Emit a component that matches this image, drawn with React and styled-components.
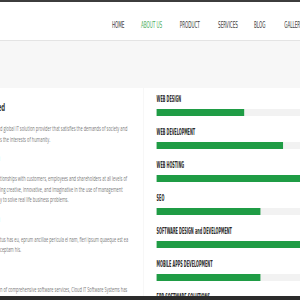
import React from "react";
import styled, { createGlobalStyle } from "styled-components";

const Global = createGlobalStyle`
  html, body {
    margin: 0;
    padding: 0;
    overflow: hidden;
    background: #fff;
  }
`;

// the whole page is drawn narrow, as in the screenshot
const Page = styled.div`
  width: 518px;
  transform: scaleX(0.58);
  transform-origin: 0 0;
  font-family: "Open Sans", sans-serif;
`;

const TopStrip = styled.div`
  height: 2px;
  background: #3d3d3d;
`;

const Header = styled.header`
  box-sizing: border-box;
  height: 39px;
  padding: 0 0 9px 193px;
  background: #fff;
  border-bottom: 1px solid #e4e4e4;
  box-shadow: 0 1px 3px rgba(0, 0, 0, 0.05);
  display: grid;
  grid-template-columns: 50px 67px 66px 62px 52px auto;
  align-items: end;
`;

const NavLink = styled.a`
  font-family: "DejaVu Sans Condensed", "DejaVu Sans", sans-serif;
  font-size: 8px;
  line-height: 10px;
  letter-spacing: -0.1px;
  text-transform: uppercase;
  text-decoration: none;
  white-space: nowrap;
  color: ${(p) => (p.$active ? "#4aad5b" : "#3a3a3a")};
`;

const Banner = styled.div`
  height: 47px;
  background: #f7f7f7;
`;

const Content = styled.main`
  height: 208px;
  overflow: hidden;
  display: flex;
`;

const Left = styled.section`
  flex: none;
  width: 247px;
  padding-top: 12px;
  border-right: 1px solid #f1f1f1;
`;

const Block = styled.div`
  margin-bottom: 5px;
`;

const TitleClip = styled.div`
  width: ${(p) => p.$reach}px;
  display: flex;
  justify-content: flex-end;
  margin-bottom: 10px;
`;

const Title = styled.h3`
  margin: 0;
  flex: none;
  white-space: nowrap;
  font-size: 10.5px;
  line-height: 14px;
  font-weight: 700;
  color: #333;
`;

const Line = styled.span`
  display: block;
  white-space: nowrap;
  font-size: 6.8px;
  line-height: 10.5px;
  color: #7a7a7a;
`;

const Right = styled.section`
  flex: 1;
  margin-left: 22px;
  padding-top: 5.5px;
`;

const Skill = styled.div`
  margin-bottom: 10.5px;
`;

const Label = styled.div`
  font-family: "DejaVu Sans Condensed", "DejaVu Sans", sans-serif;
  font-weight: 700;
  font-size: 9px;
  line-height: 10px;
  color: #2a2a2a;
  white-space: nowrap;
  margin-bottom: 5.5px;
  transform: scaleX(0.73);
  transform-origin: 0 50%;

  small {
    font-size: 9px;
  }
`;

const Track = styled.div`
  height: 7px;
  background: #f2f2f2;
`;

const Fill = styled.div`
  height: 100%;
  background: #1f9c45;
`;

const Footer = styled.footer`
  height: 10px;
  background: #2b2b2b;
`;

const nav = ["Home", "About Us", "Product", "Services", "Blog", "Gallery"];

const sections = [
  {
    title: "Cloud IT Software Systems Limited",
    reach: 9,
    lines: [
      "d global IT solution provider that satisfies the demands of society and",
      "s the interests of humanity.",
    ],
  },
  {
    title: "Our Mission",
    reach: 0,
    lines: [
      "tionships with customers, employees and shareholders at all levels of",
      "ing creative, innovative, and imaginative in the use of management",
      "y to solve real life business problems.",
    ],
  },
  {
    title: "Our Vision",
    reach: 0,
    lines: [
      "tus has eu, eprum ancillae pericula ei nam, fieri ipsum quaeque est ea",
      "ceptam his.",
    ],
  },
  {
    title: "Our Services",
    reach: 0,
    lines: [
      "n of comprehensive software services, Cloud IT Software Systems has",
      "",
    ],
  },
];

const skills = [
  { name: "WEB DESIGN", value: 61 },
  { name: "WEB DEVELOPMENT", value: 88 },
  { name: "WEB HOSTING", value: 100 },
  { name: "SEO", value: 72 },
  { name: "SOFTWARE DESIGN", extra: "and", tail: "DEVELOPMENT", value: 100 },
  { name: "MOBILE APPS DEVELOPMENT", value: 72 },
  { name: "ERP SOFTWARE SOLUTIONS", value: 80 },
];

export default function App() {
  return (
    <>
      <Global />
      <Page>
        <TopStrip />
        <Header>
          {nav.map((item) => (
            <NavLink key={item} href="#" $active={item === "About Us"}>
              {item}
            </NavLink>
          ))}
        </Header>
        <Banner />
        <Content>
          <Left>
            {sections.map((s) => (
              <Block key={s.title}>
                <TitleClip $reach={s.reach}>
                  <Title>{s.title}</Title>
                </TitleClip>
                {s.lines.map((l, i) => (
                  <Line key={i}>{l || "\u00a0"}</Line>
                ))}
              </Block>
            ))}
          </Left>
          <Right>
            {skills.map((s) => (
              <Skill key={s.name}>
                <Label>
                  {s.name}
                  {s.extra && (
                    <>
                      {" "}
                      <small>{s.extra}</small> {s.tail}
                    </>
                  )}
                </Label>
                <Track>
                  <Fill style={{ width: s.value + "%" }} />
                </Track>
              </Skill>
            ))}
          </Right>
        </Content>
        <Footer />
      </Page>
    </>
  );
}
